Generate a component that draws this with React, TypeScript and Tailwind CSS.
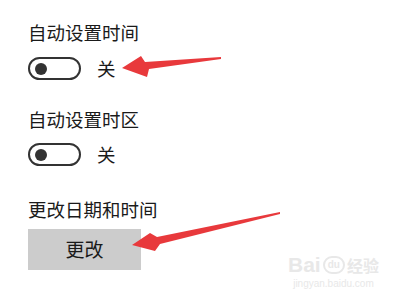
const font = { fontFamily: '"Noto Sans CJK SC", "Noto Sans", sans-serif' };

function Toggle() {
  return (
    <div className="flex h-[23px] w-[53px] items-center rounded-full border-2 border-[#333333] pl-[5px]">
      <div className="h-[12px] w-[12px] rounded-full bg-[#333333]" />
    </div>
  );
}

function Title({ children, className = "" }: { children: React.ReactNode; className?: string }) {
  return <div className={`h-[24px] text-[18.5px] leading-[24px] ${className}`}>{children}</div>;
}

function ToggleRow({ className = "" }: { className?: string }) {
  return (
    <div className={`flex h-[23px] items-center gap-[16px] ${className}`}>
      <Toggle />
      <span className="text-[18.5px] leading-[23px]">关</span>
    </div>
  );
}

export default function App() {
  return (
    <div
      className="relative h-[306px] w-[406px] overflow-hidden bg-white text-[#1a1a1a]"
      style={font}
    >
      <div className="flex flex-col px-[28px] pt-[20px]">
        <Title>自动设置时间</Title>
        <ToggleRow className="mt-[13px]" />
        <Title className="mt-[27px]">自动设置时区</Title>
        <ToggleRow className="mt-[12px]" />
        <Title className="mt-[31px]">更改日期和时间</Title>
        <button className="mt-[8px] flex h-[41px] w-[113px] items-center justify-center bg-[#cccccc] text-[19px] text-[#1a1a1a]">
          更改
        </button>
      </div>

      {/* red annotation arrows */}
      <svg className="pointer-events-none absolute left-0 top-0" width="406" height="306">
        <polygon
          points="122,68 141,56 145,62 221,57 221,59 149,69 147,77"
          fill="#e8393c"
        />
        <polygon
          points="132,245 150,233 157,237 280,212 280,214 160,244 155,251"
          fill="#e8393c"
        />
      </svg>

      {/* watermark */}
      <div className="pointer-events-none absolute left-[288px] top-[254px] flex flex-col items-center text-[#e8e8e8]">
        <div className="flex items-center text-[21px] font-bold leading-[22px]" style={{ fontFamily: '"Liberation Sans", sans-serif' }}>
          <span>Bai</span>
          <span className="mx-[2px] rounded-full border-2 border-[#e8e8e8] px-[3px] text-[10px] leading-[14px]">du</span>
          <span className="text-[16px]" style={font}>经验</span>
        </div>
        <div className="mt-[2px] text-[10px] leading-[12px]" style={{ fontFamily: '"Liberation Sans", sans-serif' }}>
          jingyan.baidu.com
        </div>
      </div>
    </div>
  );
}
